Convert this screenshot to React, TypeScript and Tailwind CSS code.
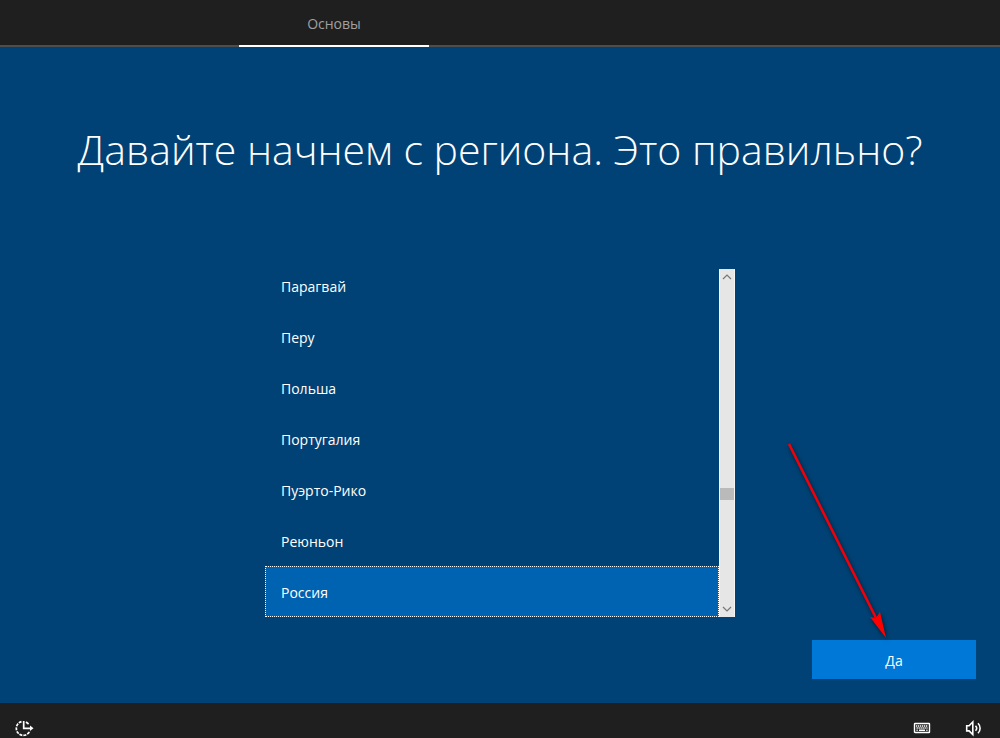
import { useState } from 'react';

const regions = ['Парагвай', 'Перу', 'Польша', 'Португалия', 'Пуэрто-Рико', 'Реюньон', 'Россия'];

export default function App() {
  const [region, setRegion] = useState('Россия');

  return (
    <div className="flex min-h-screen flex-col bg-[#004275] font-['Open_Sans','Noto_Sans',sans-serif] text-white">
      <header className="border-b-2 border-[#4d4d4d] bg-[#1f1f1f]">
        <nav className="flex pl-[239px]">
          <a
            href="#basics"
            aria-current="step"
            className="-mb-[2px] flex h-[47px] w-[190px] items-center justify-center border-b-2 border-white pt-[2px] text-sm text-[#a0a0a0]"
          >
            Основы
          </a>
        </nav>
      </header>

      <main className="flex flex-1 flex-col px-6 pb-6">
        <h1 className="mt-[72px] text-center text-[41px] leading-[60px] font-light">
          Давайте начнем с региона. Это правильно?
        </h1>

        <div className="mx-auto mt-[90px] flex h-[348px] w-full max-w-[470px]">
          <div
            role="radiogroup"
            aria-label="Регион"
            className="flex min-w-0 flex-1 flex-col justify-end overflow-hidden"
          >
            {regions.map((name) => (
              <RegionOption
                key={name}
                name={name}
                selected={name === region}
                onSelect={() => setRegion(name)}
              />
            ))}
          </div>
          <Scrollbar />
        </div>

        <div className="mt-auto flex justify-end">
          <div className="relative">
            <button
              type="button"
              className="h-[39px] w-[164px] bg-[#0078d7] pt-[2px] text-sm hover:bg-[#1a86db]"
            >
              Да
            </button>
            <Arrow />
          </div>
        </div>
      </main>

      <footer className="flex h-[35px] items-end justify-between bg-[#1f1f1f] pr-4 pl-[14px]">
        <button type="button" aria-label="Специальные возможности">
          <EaseOfAccessIcon />
        </button>
        <div className="flex gap-[33px]">
          <button type="button" aria-label="Клавиатура">
            <KeyboardIcon />
          </button>
          <button type="button" aria-label="Громкость">
            <VolumeIcon />
          </button>
        </div>
      </footer>
    </div>
  );
}

function RegionOption({
  name,
  selected,
  onSelect,
}: {
  name: string;
  selected: boolean;
  onSelect: () => void;
}) {
  return (
    <label
      className={
        selected
          ? 'relative flex h-[51px] shrink-0 items-center border border-dotted border-white bg-[#0063b1] px-[15px] pt-[2px] text-sm'
          : 'relative flex h-[51px] shrink-0 items-center border border-transparent px-[15px] pt-[2px] text-sm'
      }
    >
      <input type="radio" name="region" checked={selected} onChange={onSelect} className="sr-only" />
      {name}
    </label>
  );
}

function Scrollbar() {
  return (
    <div className="flex w-4 flex-col items-stretch border-x border-[#f5f5f5] bg-[#e6e6e6] text-[#777777]">
      <button type="button" aria-label="Вверх" className="flex h-4 items-center justify-center">
        <svg width="10" height="6" viewBox="0 0 10 6" fill="none" stroke="currentColor" strokeWidth="1.2">
          <path d="M1 5l4-4 4 4" />
        </svg>
      </button>
      <div className="flex flex-1 flex-col">
        <div className="grow-[203]" />
        <div className="h-3 bg-[#bababa]" />
        <div className="grow-[101]" />
      </div>
      <button type="button" aria-label="Вниз" className="flex h-4 items-center justify-center">
        <svg width="10" height="6" viewBox="0 0 10 6" fill="none" stroke="currentColor" strokeWidth="1.2">
          <path d="M1 1l4 4 4-4" />
        </svg>
      </button>
    </div>
  );
}

function Arrow() {
  return (
    <svg
      width="120"
      height="204"
      viewBox="0 0 120 204"
      className="pointer-events-none absolute right-[76px] bottom-full overflow-visible drop-shadow-[1px_2px_2px_rgba(0,0,0,0.6)]"
    >
      <path d="M9 8l87 174" stroke="#f00008" strokeWidth="2.6" fill="none" />
      <path d="M106 202L90 181l6 1 4-6z" fill="#ff0000" />
    </svg>
  );
}

function EaseOfAccessIcon() {
  return (
    <svg width="20" height="20" viewBox="0 0 20 20" fill="none" stroke="#fff" strokeWidth="1.7">
      <path d="M7.5 3.600A7 7 0 1 0 15.800 13" strokeDasharray="3 1" />
      <path d="M9.700 3v7.300H17" />
      <path d="M16 7.500l3.500 2.800L16 13z" fill="#fff" stroke="none" />
      <path d="M12 4l2.600 2" />
    </svg>
  );
}

function KeyboardIcon() {
  return (
    <svg width="18" height="20" viewBox="0 0 18 20" fill="none" stroke="#fff">
      <rect x="1.5" y="5.500" width="15" height="9" rx="0.5" strokeWidth="1.4" />
      <path d="M3 8h12M3.500 10h11" strokeDasharray="1.3 0.7" strokeWidth="1.4" />
      <path d="M3.500 12.200h1.200M6 12.200h6M13.300 12.200h1.200" strokeWidth="1.4" />
    </svg>
  );
}

function VolumeIcon() {
  return (
    <svg width="20" height="20" viewBox="0 0 20 20" fill="none" stroke="#fff" strokeWidth="1.6">
      <path d="M2.700 7.700h2.400l3.700-3.700v12.600l-3.700-3.700H2.700z" />
      <path d="M11.500 7.700a3.600 3.600 0 0 1 0 5M14 5.200a7 7 0 0 1 0 10" />
    </svg>
  );
}
